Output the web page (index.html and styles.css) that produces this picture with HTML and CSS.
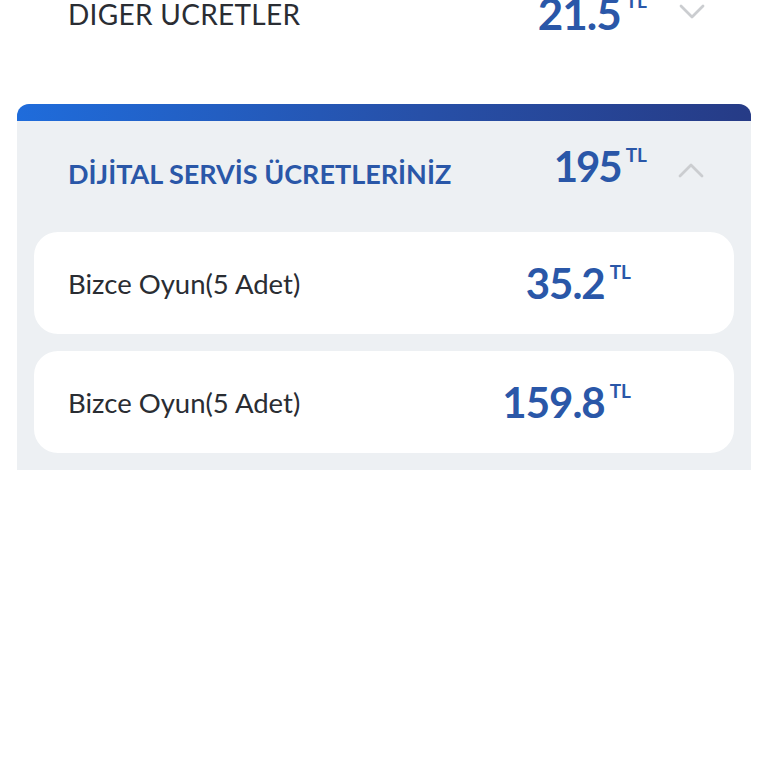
FILE: index.html
```html
<!DOCTYPE html>
<html lang="tr">
<head>
<meta charset="utf-8">
<link rel="stylesheet" href="styles.css">
</head>
<body>
<div class="page">
  <div class="row-other">
    <div class="other-title">DIGER UCRETLER</div>
    <div class="amount amount-top"><span class="num">21.5</span><span class="cur">TL</span></div>
    <svg class="chev chev-down" width="26" height="16" viewBox="0 0 26 16"><path d="M2 2 L13 13 L24 2" fill="none" stroke="#cbcdd0" stroke-width="2.8" stroke-linecap="round" stroke-linejoin="round"/></svg>
  </div>

  <div class="card">
    <div class="card-bar"></div>
    <div class="card-head">
      <div class="head-title">DİJİTAL SERVİS ÜCRETLERİNİZ</div>
      <div class="amount amount-head"><span class="num">195</span><span class="cur">TL</span></div>
      <svg class="chev chev-up" width="26" height="16" viewBox="0 0 26 16"><path d="M2 14 L13 3 L24 14" fill="none" stroke="#cbcdd0" stroke-width="2.8" stroke-linecap="round" stroke-linejoin="round"/></svg>
    </div>
    <div class="items">
      <div class="item">
        <div class="item-label">Bizce Oyun(5 Adet)</div>
        <div class="amount amount-item"><span class="num">35.2</span><span class="cur">TL</span></div>
      </div>
      <div class="item">
        <div class="item-label">Bizce Oyun(5 Adet)</div>
        <div class="amount amount-item"><span class="num">159.8</span><span class="cur">TL</span></div>
      </div>
    </div>
  </div>
</div>
</body>
</html>
```

FILE: styles.css
```css
html, body {
  margin: 0;
  padding: 0;
  background: #ffffff;
}
body {
  font-family: "Lato", "Noto Sans", sans-serif;
  width: 768px;
  height: 768px;
  overflow: hidden;
}
.page {
  display: flex;
  flex-direction: column;
}
.row-other {
  display: flex;
  align-items: center;
  height: 60px;
  margin-top: -16px;
  padding: 0 63px 0 68px;
}
.other-title {
  flex: 1;
  font-size: 28px;
  color: #2a2d33;
  letter-spacing: 0.3px;
}
.amount {
  display: flex;
  align-items: flex-start;
  color: #2a57a8;
  font-weight: 700;
}
.amount .num {
  font-size: 42px;
  line-height: 1;
  letter-spacing: -1px;
}
.amount .cur {
  font-size: 19px;
  line-height: 1;
  margin-left: 5px;
}
.amount-top .num {
  font-size: 44px;
}
.amount-top {
  margin-right: 32px;
  margin-top: -2px;
}
.chev {
  display: block;
  flex: none;
}
.chev-down {
  margin-bottom: 4px;
}
.card {
  margin: 60px 17px 0 17px;
  background: #edf0f3;
  border-radius: 12px 12px 0 0;
  overflow: hidden;
  padding-bottom: 17px;
}
.card-bar {
  height: 17px;
  background: linear-gradient(90deg, #1f6cdb 0%, #2750a8 55%, #263b86 100%);
}
.card-head {
  display: flex;
  align-items: center;
  height: 105px;
  padding: 0 47px 6px 51px;
}
.head-title {
  flex: 1;
  font-size: 27px;
  font-weight: 700;
  color: #2a57a8;
}
.amount-head .num {
  letter-spacing: -2px;
}
.amount-head {
  margin-right: 31px;
  margin-bottom: 16px;
}
.chev-up {
  margin-bottom: 8px;
}
.items {
  display: flex;
  flex-direction: column;
  gap: 17px;
  padding: 0 17px;
}
.item {
  display: flex;
  align-items: center;
  height: 102px;
  background: #ffffff;
  border-radius: 24px;
  padding: 0 103px 0 34px;
}
.item-label {
  flex: 1;
  font-size: 27.5px;
  color: #2a2d33;
}
```
